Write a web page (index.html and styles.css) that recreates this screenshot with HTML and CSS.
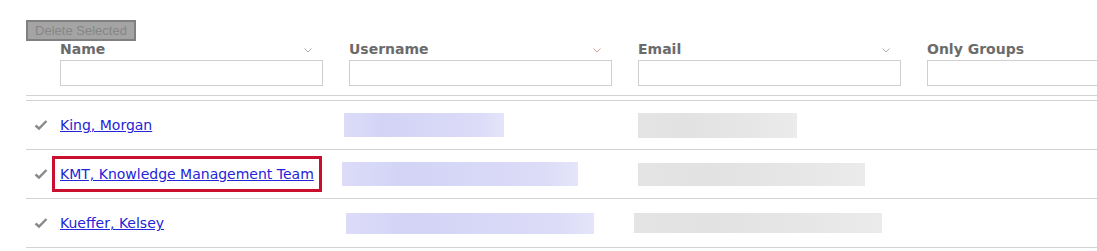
FILE: index.html
```html
<!DOCTYPE html>
<html lang="en">
<head>
  <meta charset="UTF-8">
  <title>Users</title>
  <link rel="stylesheet" href="styles.css">
</head>
<body>

<div class="user-grid">
  <div class="toolbar">
    <button class="delete-btn" disabled>Delete Selected</button>
  </div>

  <div class="head-row">
    <div class="sel-cell"></div>
    <div class="head-cell">
      <div class="head-label">Name <svg class="chev" width="8" height="5" viewBox="0 0 8 5"><polyline points="0.5,0.5 4,4 7.5,0.5" /></svg></div>
      <input type="text" class="filter">
    </div>
    <div class="head-cell">
      <div class="head-label">Username <svg class="chev sorted" width="8" height="5" viewBox="0 0 8 5"><polyline points="0.5,0.5 4,4 7.5,0.5" /></svg></div>
      <input type="text" class="filter">
    </div>
    <div class="head-cell">
      <div class="head-label">Email <svg class="chev" width="8" height="5" viewBox="0 0 8 5"><polyline points="0.5,0.5 4,4 7.5,0.5" /></svg></div>
      <input type="text" class="filter">
    </div>
    <div class="head-cell">
      <div class="head-label">Only Groups</div>
      <input type="text" class="filter">
    </div>
  </div>

  <div class="spacer-row"></div>

  <div class="data-row">
    <div class="sel-cell"><svg class="check" width="14" height="12" viewBox="0 0 14 12"><polyline points="1.5,6.5 5,9.5 12.5,2" /></svg></div>
    <div class="cell"><a href="#">King, Morgan</a></div>
    <div class="cell"><span class="blur user" style="width: 160px; height: 24px; margin-left: -5px;"></span></div>
    <div class="cell"><span class="blur mail" style="width: 159px; height: 25px; margin-left: 0;"></span></div>
    <div class="cell"></div>
  </div>

  <div class="data-row">
    <div class="sel-cell"><svg class="check" width="14" height="12" viewBox="0 0 14 12"><polyline points="1.5,6.5 5,9.5 12.5,2" /></svg></div>
    <div class="cell"><a href="#" class="marked">KMT, Knowledge Management Team</a></div>
    <div class="cell"><span class="blur user" style="width: 236px; height: 24px; margin-left: -7px;"></span></div>
    <div class="cell"><span class="blur mail" style="width: 227px; height: 23px; margin-left: 0;"></span></div>
    <div class="cell"></div>
  </div>

  <div class="data-row">
    <div class="sel-cell"><svg class="check" width="14" height="12" viewBox="0 0 14 12"><polyline points="1.5,6.5 5,9.5 12.5,2" /></svg></div>
    <div class="cell"><a href="#">Kueffer, Kelsey</a></div>
    <div class="cell"><span class="blur user" style="width: 248px; height: 21px; margin-left: -3px;"></span></div>
    <div class="cell"><span class="blur mail" style="width: 248px; height: 20px; margin-left: -4px;"></span></div>
    <div class="cell"></div>
  </div>
</div>

</body>
</html>
```

FILE: styles.css
```css
body {
  margin: 0;
  background: #fff;
  overflow: hidden;
  font-family: "DejaVu Sans", Verdana, sans-serif;
}

.user-grid {
  padding: 20px 0 0 26px;
  overflow: hidden;
}

.toolbar {
  height: 21px;
}

.delete-btn {
  display: block;
  width: 110px;
  height: 21px;
  margin: 0;
  padding: 0;
  background-color: #a4a4a4;
  border: 2px solid #808080;
  color: #868686;
  font-family: "Liberation Sans", Arial, sans-serif;
  font-size: 13px;
  line-height: 17px;
}

.head-row,
.data-row {
  display: grid;
  grid-template-columns: 30px repeat(4, 289px);
}

.head-row {
  height: 54px;
  border-bottom: 1px solid #d3d3d3;
}

.spacer-row {
  height: 4px;
  border-bottom: 1px solid #d3d3d3;
}

.head-cell {
  padding: 0 0 0 4px;
}

.head-label {
  display: flex;
  justify-content: space-between;
  align-items: center;
  width: 263px;
  height: 18px;
  margin-top: -1px;
  padding-bottom: 1px;
  font-size: 14px;
  font-weight: bold;
  color: #6b6b6b;
}

.chev {
  margin-right: 11px;
  margin-top: 3px;
  fill: none;
  stroke: #a8b0bc;
  stroke-width: 1;
}

.chev.sorted {
  stroke: #d49a94;
}

.filter {
  display: block;
  box-sizing: border-box;
  width: 263px;
  height: 26px;
  margin: 1px 0 0;
  border: 1px solid #cfcfcf;
  background: #fff;
}

.data-row {
  height: 48px;
  border-bottom: 1px solid #d3d3d3;
  align-items: center;
}

.sel-cell {
  display: flex;
  align-items: center;
  padding-left: 8px;
}

.check {
  fill: none;
  stroke: #8a8a8a;
  stroke-width: 2.4;
}

.cell {
  display: flex;
  align-items: center;
  padding-left: 4px;
}

.cell a {
  font-size: 14px;
  color: #2424d8;
  text-decoration: underline;
}

.cell a.marked {
  padding: 2px 0;
  outline: 3px solid #c8102e;
  outline-offset: 5px;
}

.blur {
  display: block;
  flex: none;
}

.blur.user {
  background: linear-gradient(90deg, #dcdcf8 0%, #d3d3f6 25%, #d8d8f7 60%, #dcdcf8 85%, #e4e4fa 100%);
}

.blur.mail {
  background: linear-gradient(90deg, #e4e4e4 0%, #e2e2e2 30%, #e5e5e5 60%, #ebebeb 100%);
}
```
